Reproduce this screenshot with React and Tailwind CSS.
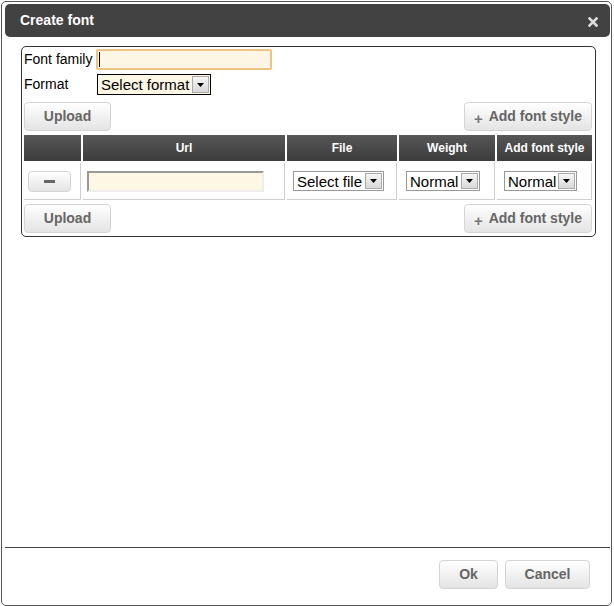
import React from "react";

const font = { fontFamily: '"Liberation Sans", Arial, sans-serif' };

const Arrow = () => (
  <span className="flex h-full w-[17px] items-center justify-center border border-[#aaa] bg-gradient-to-b from-[#f6f6f6] to-[#d9d9d9]">
    <svg width="7" height="4" viewBox="0 0 7 4">
      <path d="M0 0h7L3.5 4z" fill="#000" />
    </svg>
  </span>
);

const FakeSelect = ({ label, className }) => (
  <div className={`flex h-[20px] items-stretch border ${className}`}>
    <span className="flex flex-1 items-center pl-[3px] text-[15px] leading-none text-black">{label}</span>
    <span className="p-[1px]">
      <Arrow />
    </span>
  </div>
);

const GrayButton = ({ children, className = "" }) => (
  <button
    type="button"
    className={`flex h-[29px] items-center justify-center rounded-[4px] border border-[#d4d4d4] bg-gradient-to-b from-[#ffffff] to-[#e4e4e4] text-[14px] font-bold text-[#666] ${className}`}
  >
    {children}
  </button>
);

const AddStyle = () => (
  <GrayButton className="w-[128px] gap-[6px]">
    <span className="mt-[3px] text-[15px] leading-none text-[#777]">+</span>
    Add font style
  </GrayButton>
);

const headers = ["", "Url", "File", "Weight", "Add font style"];

export default function App() {
  return (
    <div className="h-[606px] w-[614px] bg-white" style={font}>
      <div className="ml-[1px] mt-[1px] flex h-[605px] w-[611px] flex-col rounded-[5px] border border-[#555] bg-white pl-[3px] pr-[1px] pt-[2px]">
        {/* title */}
        <div className="flex h-[33px] items-center justify-between rounded-[5px] bg-[#424242] pl-[15px] pr-[12px]">
          <span className="text-[14px] font-bold text-white">Create font</span>
          <svg width="10" height="10" viewBox="0 0 10 10" className="mt-[3px]">
            <path d="M1.5 1.5l7 7M8.5 1.5l-7 7" stroke="#dcdcdc" strokeWidth="2.6" strokeLinecap="square" />
          </svg>
        </div>

        {/* body */}
        <div className="flex-1">
          <div className="ml-[16px] mt-[9px] w-[575px] rounded-[5px] border border-[#333] pb-[3px] pl-[2px] pr-[3px] pt-[2px]">
            <div className="flex h-[21px] items-center">
              <span className="w-[72px] text-[14px] text-black">Font family</span>
              <div className="flex h-[21px] w-[176px] items-center rounded-[2px] border-2 border-[#ecc584] bg-[#fdf6e4] pl-[1px]">
                <span className="h-[15px] w-[1px] bg-black" />
              </div>
            </div>
            <div className="mt-[4px] flex h-[21px] items-center">
              <span className="w-[73px] text-[14px] text-black">Format</span>
              <FakeSelect label="Select format" className="h-[21px] w-[114px] border-black bg-[#fdf7e4]" />
            </div>
            <div className="mt-[7px] flex justify-between">
              <GrayButton className="w-[87px]">Upload</GrayButton>
              <AddStyle />
            </div>

            <div className="mt-[4px] grid grid-cols-[57px_202px_110px_96px_95px] gap-[2px]">
              {headers.map((h, i) => (
                <div
                  key={i}
                  className="flex h-[26px] items-center justify-center bg-gradient-to-b from-[#575757] to-[#3c3c3c] text-[12px] font-bold text-white"
                >
                  {h}
                </div>
              ))}
              <div className="flex h-[37px] items-center justify-center border-b border-r border-[#cfcfcf]">
                <button
                  type="button"
                  className="ml-[4px] mr-auto flex h-[21px] w-[43px] items-center justify-center rounded-[4px] border border-[#d4d4d4] bg-gradient-to-b from-[#ffffff] to-[#e4e4e4]"
                >
                  <span className="h-[3px] w-[11px] bg-[#666]" />
                </button>
              </div>
              <div className="flex h-[37px] items-center border-b border-r border-[#cfcfcf] pl-[4px]">
                <div className="h-[21px] w-[177px] border-2 border-b-[#eeeeee] border-l-[#999] border-r-[#eeeeee] border-t-[#999] bg-[#fdf7e4]" />
              </div>
              <div className="flex h-[37px] items-center border-b border-r border-[#cfcfcf] pl-[6px]">
                <FakeSelect label="Select file" className="w-[91px] border-[#999] bg-white" />
              </div>
              <div className="flex h-[37px] items-center border-b border-r border-[#cfcfcf] pl-[7px]">
                <FakeSelect label="Normal" className="w-[74px] border-[#999] bg-white" />
              </div>
              <div className="flex h-[37px] items-center border-b border-r border-[#cfcfcf] pl-[7px]">
                <FakeSelect label="Normal" className="w-[73px] border-[#999] bg-white" />
              </div>
            </div>

            <div className="mt-[4px] flex justify-between">
              <GrayButton className="w-[87px]">Upload</GrayButton>
              <AddStyle />
            </div>
          </div>
        </div>

        {/* footer */}
        <div className="h-[58px] border-t border-[#444]">
          <div className="mr-[20px] mt-[12px] flex justify-end gap-[7px]">
            <GrayButton className="w-[59px]">Ok</GrayButton>
            <GrayButton className="w-[85px]">Cancel</GrayButton>
          </div>
        </div>
      </div>
    </div>
  );
}
